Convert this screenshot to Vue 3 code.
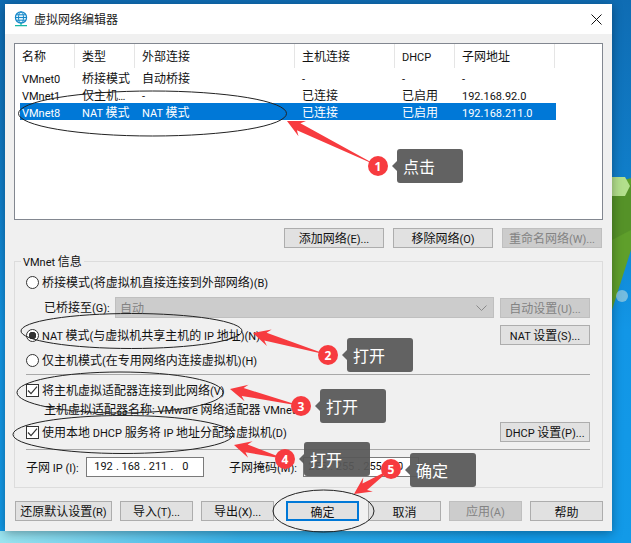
<script setup>
import { h } from 'vue';

// latin runs are set smaller than the chinese ones, as in the dialog font
const Txt = (props) => props.text
  .split(/([\x00-\x7f…]+)/)
  .filter(Boolean)
  .map((run) => (/^[\x00-\x7f…]/.test(run) ? h('span', { class: 'lat' }, run) : run));

const columns = [
  { label: '名称', width: 60 },
  { label: '类型', width: 60 },
  { label: '外部连接', width: 160 },
  { label: '主机连接', width: 100 },
  { label: 'DHCP', width: 60 },
  { label: '子网地址', width: 100 },
];

const rows = [
  { cells: ['VMnet0', '桥接模式', '自动桥接', '-', '-', '-'] },
  { cells: ['VMnet1', '仅主机…', '-', '已连接', '已启用', '192.168.92.0'] },
  { cells: ['VMnet8', 'NAT 模式', 'NAT 模式', '已连接', '已启用', '192.168.211.0'], selected: true },
];

const subnetIp = ['192', '168', '211', '0'];
const subnetMask = ['255', '255', '255', '0'];

const ellipses = [
  { cx: 152.5, cy: 113.5, rx: 134, ry: 22.5 },
  { cx: 131.5, cy: 331, rx: 110.5, ry: 17.5 },
  { cx: 120, cy: 392.5, rx: 103, ry: 20.5 },
  { cx: 123, cy: 434.5, rx: 110, ry: 19 },
  { cx: 323.5, cy: 511, rx: 50.5, ry: 21 },
];

// tapered red arrow, thin at the badge, with a swept-back head
const arrowPoints = (from, to, head = 17, headWidth = 8.5, neckWidth = 4) => {
  const dx = to[0] - from[0];
  const dy = to[1] - from[1];
  const len = Math.hypot(dx, dy);
  const ux = dx / len;
  const uy = dy / len;
  const nx = -uy;
  const ny = ux;
  const at = (back, side) => [
    to[0] - ux * back + nx * side,
    to[1] - uy * back + ny * side,
  ];
  const pts = [
    from,
    at(head - 4, neckWidth),
    at(head, headWidth),
    to,
    at(head, -headWidth),
    at(head - 4, -neckWidth),
  ];
  return pts.map((p) => p[0].toFixed(1) + ',' + p[1].toFixed(1)).join(' ');
};

const steps = [
  { n: 1, x: 378, y: 166, tip: [287, 121] },
  { n: 2, x: 328, y: 355, tip: [253, 333] },
  { n: 3, x: 301, y: 406, tip: [230, 389] },
  { n: 4, x: 285, y: 459, tip: [234, 445] },
  { n: 5, x: 391, y: 469, tip: [354, 494] },
];

const notes = [
  { text: '点击', x: 397, y: 149 },
  { text: '打开', x: 347, y: 338 },
  { text: '打开', x: 320, y: 389 },
  { text: '打开', x: 304, y: 442 },
  { text: '确定', x: 410, y: 453 },
];
</script>

<template>
  <div class="desktop">
    <svg class="wallpaper" width="631" height="543" viewBox="0 0 631 543">
      <polygon points="612,184 631,178 631,250 612,310" fill="#5f9f2b" />
      <polygon points="612,196 631,184 631,230 612,240" fill="#4f8a26" opacity="0.6" />
      <polygon points="612,177 625,177 630,186 625,196 612,196" fill="#b3df8c" />
      <circle cx="622" cy="296" r="6" fill="#b9dbe0" opacity="0.6" />
    </svg>

    <div class="window">
      <div class="titlebar">
        <svg class="app-icon" width="14" height="16" viewBox="0 0 14 16">
          <circle cx="7" cy="6.5" r="5.6" fill="#e6f6fb" stroke="#1487c9" stroke-width="1.2" />
          <ellipse cx="7" cy="6.5" rx="2.5" ry="5.6" fill="none" stroke="#1487c9" />
          <path d="M1.4 6.5h11.2M2.2 3.8h9.6M2.2 9.2h9.6" stroke="#1487c9" fill="none" />
          <path d="M7 12v2M1 14.6h12" stroke="#17b7a5" stroke-width="1.2" fill="none" />
        </svg>
        <span class="title-text">虚拟网络编辑器</span>
        <svg class="close" width="11" height="11" viewBox="0 0 11 11">
          <path d="M0.5 0.5l10 10M10.5 0.5l-10 10" stroke="#111" stroke-width="1" fill="none" />
        </svg>
      </div>

      <div class="body">
        <div class="list">
          <div class="list-head">
            <div
              v-for="col in columns"
              :key="col.label"
              class="head-cell"
              :style="{ width: col.width + 'px' }"
            ><Txt :text="col.label" /></div>
          </div>
          <div
            v-for="row in rows"
            :key="row.cells[0]"
            class="list-row"
            :class="{ 'list-row--selected': row.selected }"
          >
            <div
              v-for="(cell, i) in row.cells"
              :key="i"
              class="row-cell"
              :style="{ width: columns[i].width - (i === 0 ? 5 : 0) + 'px' }"
            ><Txt :text="cell" /></div>
          </div>
        </div>

        <div class="list-actions">
          <button class="btn btn--wide"><Txt text="添加网络(E)..." /></button>
          <button class="btn btn--wide"><Txt text="移除网络(O)" /></button>
          <button class="btn btn--wide" disabled><Txt text="重命名网络(W)..." /></button>
        </div>

        <div class="group">
          <div class="group-title"><Txt text="VMnet 信息" /></div>

          <div class="line line--bridge">
            <span class="radio"></span>
            <span class="line-text"><Txt text="桥接模式(将虚拟机直接连接到外部网络)(B)" /></span>
          </div>

          <div class="line line--bridged-to">
            <span class="bridged-label line-text"><Txt text="已桥接至(G):" /></span>
            <div class="select">
              <span>自动</span>
              <svg width="11" height="6" viewBox="0 0 11 6">
                <path d="M0.5 0.5l5 5 5-5" fill="none" stroke="#8a8a8a" />
              </svg>
            </div>
            <button class="btn btn--side" disabled><Txt text="自动设置(U)..." /></button>
          </div>

          <div class="line line--nat">
            <span class="radio radio--on"></span>
            <span class="line-text"><Txt text="NAT 模式(与虚拟机共享主机的 IP 地址)(N)" /></span>
            <button class="btn btn--side btn--right"><Txt text="NAT 设置(S)..." /></button>
          </div>

          <div class="line line--host">
            <span class="radio"></span>
            <span class="line-text"><Txt text="仅主机模式(在专用网络内连接虚拟机)(H)" /></span>
          </div>

          <div class="sep sep--first"></div>

          <div class="line line--check">
            <span class="check">
              <svg width="11" height="11" viewBox="0 0 11 11">
                <path d="M1 5.5l3 3.2 6-7" fill="none" stroke="#333" stroke-width="1.2" />
              </svg>
            </span>
            <span class="line-text"><Txt text="将主机虚拟适配器连接到此网络(V)" /></span>
          </div>

          <div class="line line--adapter">
            <span class="line-text"><Txt text="主机虚拟适配器名称: VMware 网络适配器 VMnet8" /></span>
          </div>

          <div class="line line--dhcp">
            <span class="check">
              <svg width="11" height="11" viewBox="0 0 11 11">
                <path d="M1 5.5l3 3.2 6-7" fill="none" stroke="#333" stroke-width="1.2" />
              </svg>
            </span>
            <span class="line-text"><Txt text="使用本地 DHCP 服务将 IP 地址分配给虚拟机(D)" /></span>
            <button class="btn btn--side btn--right"><Txt text="DHCP 设置(P)..." /></button>
          </div>

          <div class="sep sep--second"></div>

          <div class="line line--subnet">
            <span class="subnet-label line-text"><Txt text="子网 IP (I):" /></span>
            <div class="ip-box ip-box--ip">
              <div v-for="(part, i) in subnetIp" :key="i" class="ip-seg">
                <span class="ip-num">{{ part }}</span>
                <span v-if="i < 3" class="ip-dot">.</span>
              </div>
            </div>
            <span class="mask-label line-text"><Txt text="子网掩码(M):" /></span>
            <div class="ip-box ip-box--mask">
              <div v-for="(part, i) in subnetMask" :key="i" class="ip-seg">
                <span class="ip-num">{{ part }}</span>
                <span v-if="i < 3" class="ip-dot">.</span>
              </div>
            </div>
          </div>
        </div>

        <div class="footer">
          <button class="btn foot-reset"><Txt text="还原默认设置(R)" /></button>
          <button class="btn foot-small foot-import"><Txt text="导入(T)..." /></button>
          <button class="btn foot-small foot-export"><Txt text="导出(X)..." /></button>
          <button class="btn foot-small foot-ok">确定</button>
          <button class="btn foot-small foot-cancel">取消</button>
          <button class="btn foot-small foot-apply" disabled><Txt text="应用(A)" /></button>
          <button class="btn foot-small foot-help">帮助</button>
        </div>
      </div>
    </div>

    <div
      v-for="note in notes"
      :key="note.x"
      class="note"
      :style="{ left: note.x + 'px', top: note.y + 'px' }"
    >{{ note.text }}</div>

    <svg class="marks" width="631" height="543" viewBox="0 0 631 543">
      <ellipse
        v-for="(e, i) in ellipses"
        :key="i"
        :cx="e.cx"
        :cy="e.cy"
        :rx="e.rx"
        :ry="e.ry"
        fill="none"
        stroke="#222"
        stroke-width="1"
      />
      <g v-for="s in steps" :key="s.n">
        <polygon :points="arrowPoints([s.x, s.y], s.tip)" fill="#f73b3f" />
        <circle :cx="s.x" :cy="s.y" r="10" fill="#f73b3f" />
        <text :x="s.x" :y="s.y + 4.5" class="badge-num" text-anchor="middle">{{ s.n }}</text>
      </g>
    </svg>
  </div>
</template>

<style>
.lat {
  font-family: Roboto, "Noto Sans", sans-serif;
  font-size: 11px;
}
</style>

<style scoped>
.desktop {
  position: relative;
  width: 631px;
  height: 543px;
  box-sizing: border-box;
  padding: 4px 0 0 5px;
  overflow: hidden;
  background:
    linear-gradient(90deg, rgba(170, 236, 240, 0.9) 0, rgba(90, 200, 235, 0.5) 240px, rgba(18, 150, 232, 0) 520px) bottom / 100% 12px no-repeat,
    linear-gradient(180deg, #0f6cb3 0, #1080cc 200px, #1296e6 330px, #129ae8 100%) right / 100% 100% no-repeat;
  font-family: "Noto Sans CJK SC", "Noto Sans", sans-serif;
  font-size: 12px;
  color: #111;
}

.wallpaper {
  position: absolute;
  left: 0;
  top: 0;
}

.window {
  position: relative;
  width: 607px;
  height: 527px;
  background: #f0f0f0;
  box-shadow: 0 2px 10px rgba(0, 0, 0, 0.35);
}

.titlebar {
  display: flex;
  align-items: center;
  height: 30px;
  background: #fff;
  padding: 0 10px 0 9px;
}

.app-icon {
  margin-right: 6px;
}

.title-text {
  font-size: 12px;
  color: #222;
  padding-bottom: 1px;
}

.close {
  margin-left: auto;
}

.body {
  padding: 9px 9px 0;
}

.list {
  height: 177px;
  box-sizing: border-box;
  border: 1px solid #828790;
  background: #fff;
}

.list-head {
  display: flex;
  height: 24px;
}

.head-cell {
  box-sizing: border-box;
  padding-left: 7px;
  line-height: 24px;
  border-right: 1px solid #e5e5e5;
}

.list-row {
  display: flex;
  width: 536px;
  height: 17px;
  margin-left: 5px;
  line-height: 17px;
}

.list-head + .list-row {
  margin-top: 1px;
}

.list-row--selected {
  background: #0078d7;
  color: #fff;
}

.row-cell {
  box-sizing: border-box;
  padding-left: 2px;
  white-space: nowrap;
}

.row-cell + .row-cell {
  padding-left: 7px;
}

.list-actions {
  display: flex;
  justify-content: flex-end;
  gap: 9px;
  margin-top: 8px;
  padding-right: 1px;
}

.btn {
  height: 20px;
  padding: 0;
  box-sizing: border-box;
  border: 1px solid #adadad;
  background: #e1e1e1;
  font: inherit;
  color: #111;
  white-space: nowrap;
  line-height: 17px;
}

.btn:disabled {
  background: #ccc;
  border-color: #bfbfbf;
  color: #838383;
}

.btn--wide {
  width: 100px;
}

.group {
  height: 227px;
  margin-top: 13px;
  box-sizing: border-box;
  border: 1px solid #dcdcdc;
}

.group-title {
  width: fit-content;
  height: 16px;
  line-height: 16px;
  margin: -9px 0 0 6px;
  padding: 0 2px;
  background: #f0f0f0;
}

.line {
  display: flex;
  align-items: center;
  padding-left: 11px;
}

.line-text {
  padding-bottom: 2px;
}

.line--bridge {
  height: 18px;
  margin-top: 4px;
}

.line--bridged-to {
  height: 21px;
  margin-top: 6px;
  padding-left: 0;
}

.bridged-label {
  width: 100px;
  padding-left: 29px;
  box-sizing: border-box;
}

.select {
  display: flex;
  align-items: center;
  justify-content: space-between;
  width: 379px;
  height: 21px;
  box-sizing: border-box;
  border: 1px solid #bfbfbf;
  background: #ccc;
  color: #838383;
  padding: 0 6px 0 4px;
}

.btn--side {
  width: 90px;
  margin-left: 6px;
}

.btn--right {
  margin-left: auto;
  margin-right: 12px;
}

.line--nat {
  height: 20px;
  margin-top: 7px;
}

.line--host {
  height: 18px;
  margin-top: 6px;
}

.sep {
  height: 1px;
  margin: 0 12px 0 11px;
  background: #a8a8a8;
}

.sep--first {
  margin-top: 5px;
}

.sep--second {
  margin-top: 7px;
}

.line--check {
  height: 18px;
  margin-top: 6px;
}

.line--adapter {
  height: 18px;
  margin-top: 1px;
  padding-left: 29px;
}

.line--dhcp {
  height: 20px;
  margin-top: 4px;
}

.line--subnet {
  height: 20px;
  margin-top: 7px;
}

.subnet-label {
  width: 60px;
}

.ip-box {
  display: flex;
  height: 20px;
  box-sizing: border-box;
  border: 1px solid #7a7a7a;
  background: #fff;
  line-height: 18px;
  padding-left: 7px;
  font-family: Roboto, sans-serif;
  font-size: 11px;
}

.ip-box--ip {
  width: 118px;
}

.mask-label {
  width: 74px;
  margin-left: 25px;
}

.ip-box--mask {
  width: 116px;
  padding-left: 4px;
}

.ip-seg {
  display: flex;
  width: 27.5px;
}

.ip-num {
  width: 19px;
  text-align: center;
}

.ip-dot {
  margin-left: 3px;
}

.radio {
  width: 13px;
  height: 13px;
  margin-right: 3px;
  box-sizing: border-box;
  border: 1px solid #333;
  border-radius: 50%;
  background: #fff;
  flex: none;
}

.radio--on {
  background: radial-gradient(circle, #333 0 3.5px, #fff 4px);
}

.check {
  display: flex;
  align-items: center;
  justify-content: center;
  width: 13px;
  height: 13px;
  margin-right: 3px;
  box-sizing: border-box;
  border: 1px solid #333;
  background: #fff;
  flex: none;
}

.footer {
  display: flex;
  margin-top: 13px;
  padding-left: 1px;
}

.foot-reset {
  width: 97px;
}

.foot-small {
  width: 73px;
}

.foot-import {
  margin-left: 8px;
}

.foot-export {
  margin-left: 8px;
}

.foot-ok {
  margin-left: 12px;
  border: 2px solid #0078d7;
  line-height: 15px;
}

.foot-cancel {
  margin-left: 9px;
}

.foot-apply {
  margin-left: 8px;
}

.foot-help {
  margin-left: 8px;
}

.note {
  position: absolute;
  width: 66px;
  height: 34px;
  box-sizing: border-box;
  padding-left: 6px;
  border-radius: 3px;
  background: rgba(88, 88, 88, 0.94);
  color: #fff;
  font-size: 16px;
  line-height: 34px;
}

.note::before {
  content: "";
  position: absolute;
  left: -5px;
  top: 12px;
  border-style: solid;
  border-width: 5px 5px 5px 0;
  border-color: transparent rgba(88, 88, 88, 0.94) transparent transparent;
}

.marks {
  position: absolute;
  left: 0;
  top: 0;
  pointer-events: none;
}

.badge-num {
  fill: #fff;
  font-size: 12px;
  font-weight: 700;
  font-family: "Noto Sans", sans-serif;
}
</style>
